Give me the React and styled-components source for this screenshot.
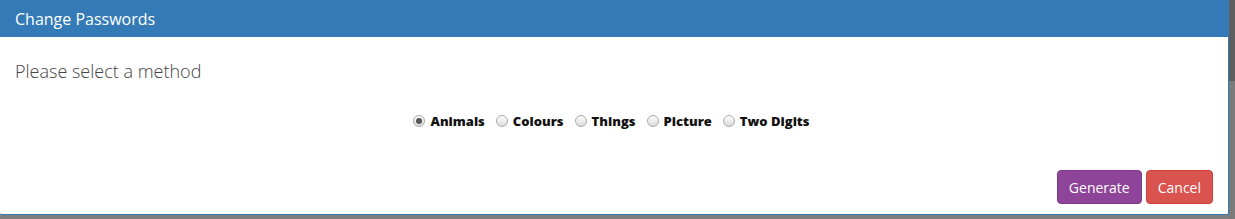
import React, { useState } from 'react'
import styled, { createGlobalStyle } from 'styled-components'

const GlobalStyle = createGlobalStyle`
  html, body {
    margin: 0;
    padding: 0;
    height: 219px;
    overflow: hidden;
    background: #7f7f7f;
  }
  * { box-sizing: border-box; }
`

const Page = styled.div`
  display: flex;
  height: 219px;
  font-family: "Open Sans", "Liberation Sans", sans-serif;
`

const Backdrop = styled.div`
  flex: 1;
  display: flex;
  flex-direction: column;
`

const Modal = styled.div`
  width: 1229px;
  background: #fff;
  border: 1px solid #337ab7;
  border-top: none;
  border-left: none;
  border-radius: 0 0 2px 2px;
`

const Header = styled.div`
  height: 37px;
  background: #337ab7;
  color: #fff;
  font-size: 16px;
  padding: 0 15px;
  display: flex;
  align-items: center;
`

const Body = styled.div`
  padding: 22px 15px 0;
`

const Prompt = styled.div`
  font-size: 18px;
  font-weight: 300;
  color: #444;
  line-height: 24px;
`

const Methods = styled.div`
  display: flex;
  justify-content: center;
  align-items: center;
  gap: 11px;
  margin-top: 29px;
  padding-right: 5px;
`

const Option = styled.label`
  display: flex;
  align-items: center;
  gap: 5px;
  font-size: 13px;
  font-weight: 800;
  color: #111;
  cursor: pointer;
`

const Dot = styled.span`
  width: 12px;
  height: 12px;
  border-radius: 50%;
  border: 1px solid #aaa;
  background: linear-gradient(#fdfdfd, #dcdcdc);
  display: flex;
  align-items: center;
  justify-content: center;

  &::after {
    content: '';
    width: 6px;
    height: 6px;
    border-radius: 50%;
    background: ${({ $on }) => ($on ? '#555' : 'transparent')};
  }
`

const Footer = styled.div`
  display: flex;
  justify-content: flex-end;
  gap: 4px;
  padding: 40px 15px 10px;
`

const Button = styled.button`
  font-family: inherit;
  font-size: 14px;
  color: #fff;
  height: 34px;
  padding: 0 11px;
  border-radius: 4px;
  border: 1px solid ${({ $tone }) => ($tone === 'danger' ? '#d43f3a' : '#7d3c8c')};
  background: ${({ $tone }) => ($tone === 'danger' ? '#d9534f' : '#8e4498')};
`

const Scrollbar = styled.div`
  width: 6px;
  display: flex;
  flex-direction: column;
  background: #7a7a7a;

  &::before {
    content: '';
    height: 81px;
    background: #5e5e5e;
  }
`

const methods = ['Animals', 'Colours', 'Things', 'Picture', 'Two Digits']

const App = () => {
  const [method, setMethod] = useState('Animals')

  return (
    <Page>
      <GlobalStyle />
      <Backdrop>
        <Modal>
          <Header>Change Passwords</Header>
          <Body>
            <Prompt>Please select a method</Prompt>
            <Methods>
              {methods.map(m => (
                <Option key={m} onClick={() => setMethod(m)}>
                  <Dot $on={method === m} />
                  {m}
                </Option>
              ))}
            </Methods>
          </Body>
          <Footer>
            <Button>Generate</Button>
            <Button $tone="danger">Cancel</Button>
          </Footer>
        </Modal>
      </Backdrop>
      <Scrollbar />
    </Page>
  )
}

export default App
